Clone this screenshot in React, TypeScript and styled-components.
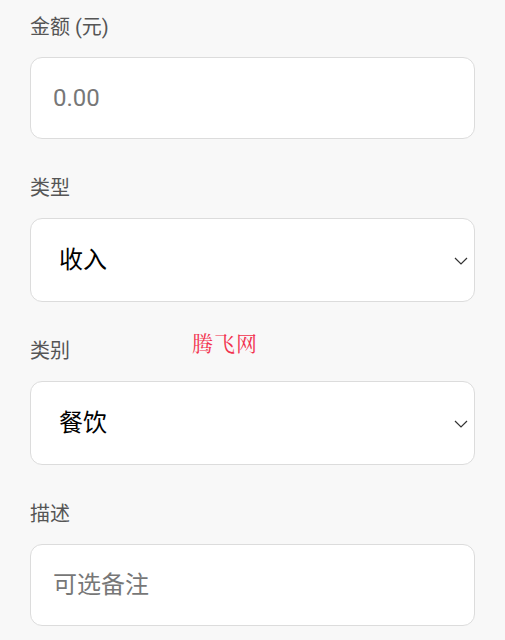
import React from "react";
import styled, { createGlobalStyle } from "styled-components";

const Global = createGlobalStyle`
  html, body { margin: 0; padding: 0; background: #f8f8f8; }
  body { font-family: Roboto, "Noto Sans CJK SC", sans-serif; }
  * { box-sizing: border-box; }
`;

const Page = styled.div`
  position: relative;
  padding: 13px 30px 0;
  display: flex;
  flex-direction: column;
  gap: 35px;
  background: #f8f8f8;
  min-height: 640px;
`;

const Group = styled.div`
  display: flex;
  flex-direction: column;
`;

const Label = styled.label`
  font-size: 20px;
  line-height: 28px;
  color: #555;
  margin-bottom: 16px;
`;

const Input = styled.input`
  height: 82px;
  width: 100%;
  border: 1px solid #dcdcdc;
  border-radius: 12px;
  background: #fff;
  padding: 0 22px;
  font-size: 24px;
  font-family: Roboto, "Noto Sans CJK SC", sans-serif;
  color: #222;
  outline: none;
  &::placeholder { color: #777; }
`;

const SelectWrap = styled.div`
  position: relative;
  height: 84px;
`;

const Select = styled.select`
  appearance: none;
  -webkit-appearance: none;
  width: 100%;
  height: 100%;
  border: 1px solid #dcdcdc;
  border-radius: 12px;
  background: #fff;
  padding: 0 28px;
  font-size: 24px;
  font-family: Roboto, "Noto Sans CJK SC", sans-serif;
  color: #000;
  outline: none;
`;

const Chevron = styled.svg`
  position: absolute;
  right: 7px;
  top: 50%;
  margin-top: -3px;
  pointer-events: none;
`;

const Watermark = styled.div`
  position: absolute;
  left: 192px;
  top: 327px;
  font-family: "Noto Serif CJK SC", "Liberation Serif", "Noto Sans CJK SC", serif;
  font-size: 21px;
  letter-spacing: 1px;
  color: #f2324e;
  pointer-events: none;
`;

function SelectField({ label, value, options }: { label: string; value: string; options: string[] }) {
  return (
    <Group>
      <Label>{label}</Label>
      <SelectWrap>
        <Select defaultValue={value}>
          {options.map((o) => (
            <option key={o} value={o}>{o}</option>
          ))}
        </Select>
        <Chevron width="14" height="8" viewBox="0 0 14 8">
          <path d="M1 1 L7 7 L13 1" fill="none" stroke="#333" strokeWidth="1.2" />
        </Chevron>
      </SelectWrap>
    </Group>
  );
}

export default function App() {
  return (
    <>
      <Global />
      <Page>
        <Group>
          <Label>金额 (元)</Label>
          <Input placeholder="0.00" />
        </Group>
        <SelectField label="类型" value="收入" options={["收入", "支出"]} />
        <SelectField label="类别" value="餐饮" options={["餐饮", "交通", "购物"]} />
        <Group>
          <Label>描述</Label>
          <Input placeholder="可选备注" />
        </Group>
        <Watermark>腾飞网</Watermark>
      </Page>
    </>
  );
}
